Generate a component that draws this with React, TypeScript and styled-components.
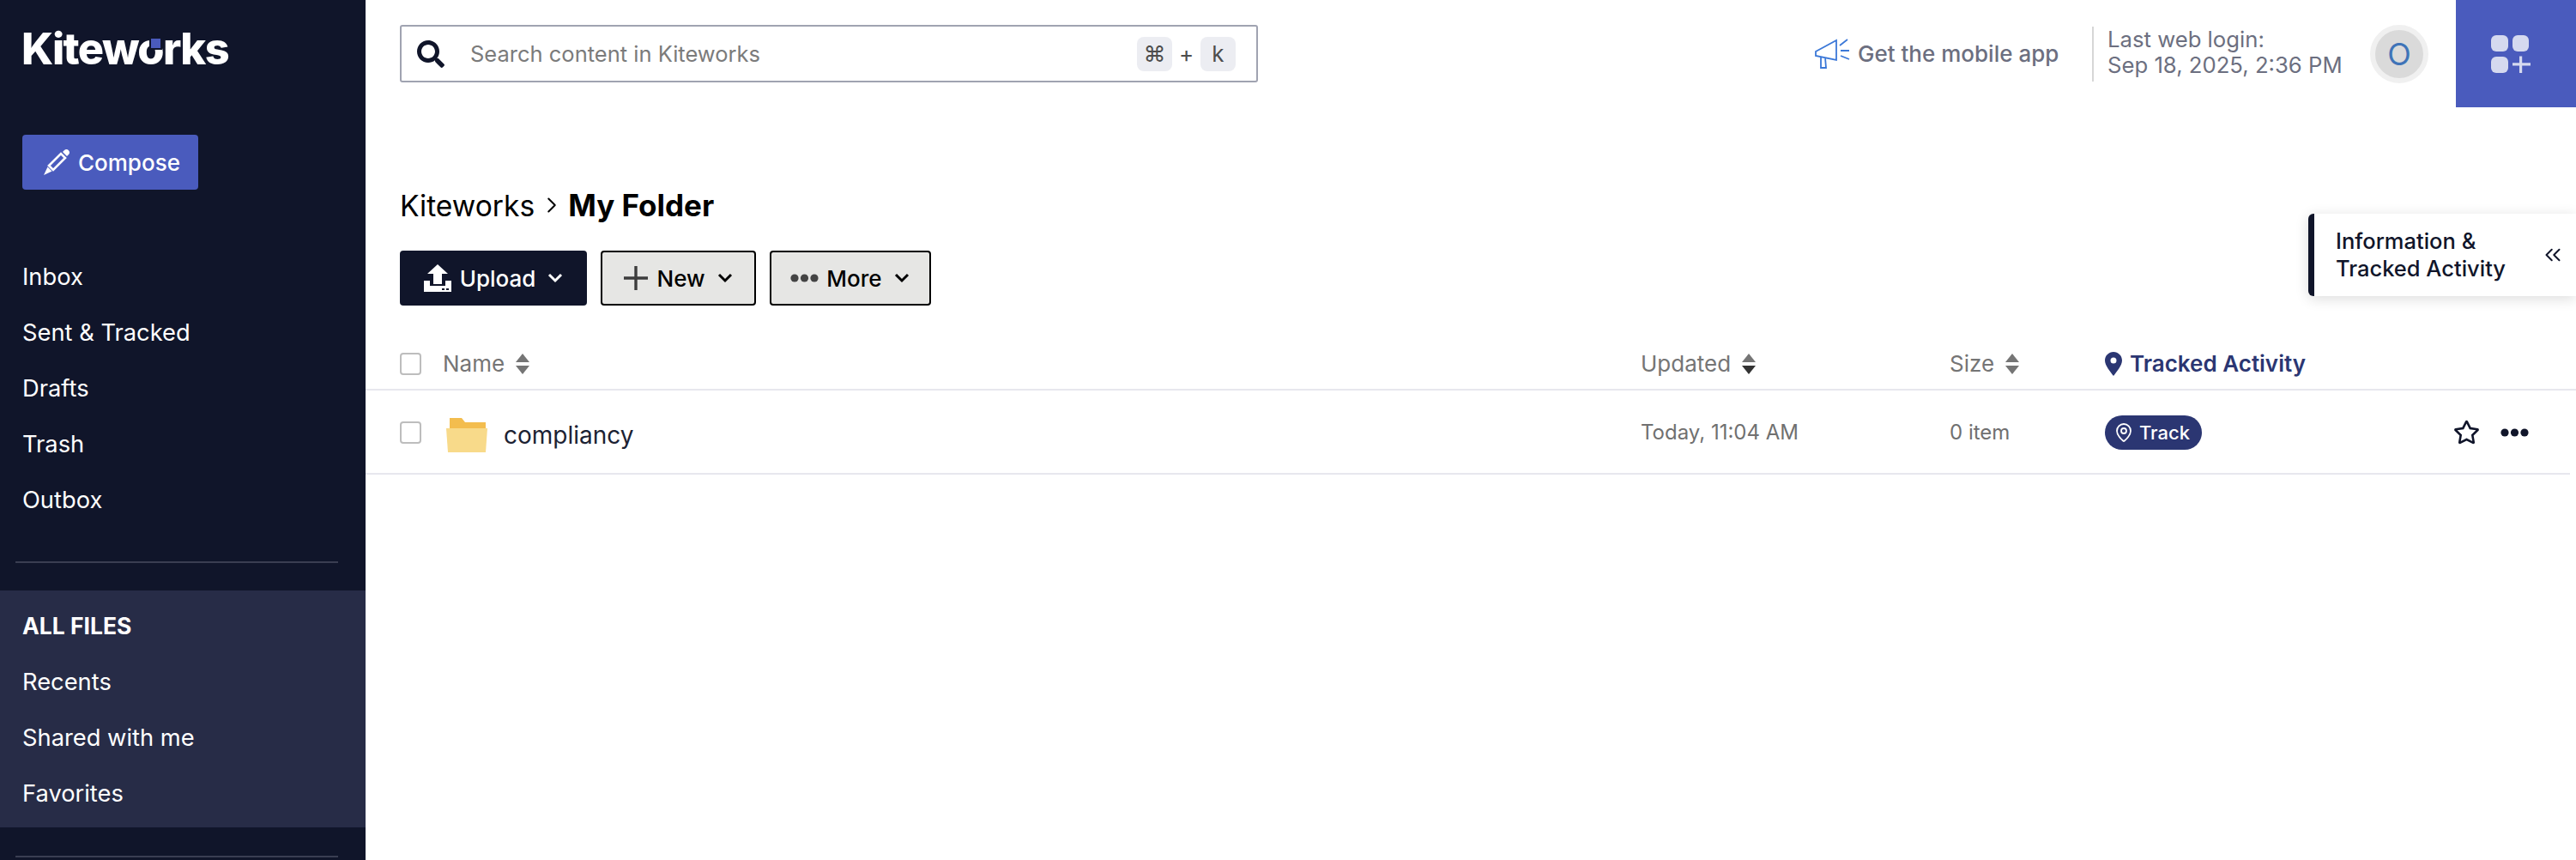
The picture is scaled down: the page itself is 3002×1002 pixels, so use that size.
import styled, { createGlobalStyle } from 'styled-components';
import { FaSearch, FaRegStar } from 'react-icons/fa';
import { ChevronRight, ChevronsLeft, MapPin } from 'lucide-react';

const GlobalStyle = createGlobalStyle`
  html, body { margin: 0; padding: 0; background: #fff; }
  body { font-family: Inter, "Noto Sans", sans-serif; overflow: hidden; }
  * { box-sizing: border-box; }
`;

const Page = styled.div`
  display: grid;
  grid-template-columns: 426px 1fr;
  width: 3002px;
  height: 1002px;
  overflow: hidden;
  position: relative;
`;

const Sidebar = styled.aside`
  background: #10152a;
  color: #fff;
  height: 1002px;
  overflow: hidden;
`;

const Logo = styled.div`
  padding: 24px 0 0 25px;
  height: 157px;
  font-size: 50.5px;
  line-height: 66px;
  font-weight: 800;
  letter-spacing: -1.6px;
`;

const LogoO = styled.span`
  position: relative;
  &::after {
    content: '';
    position: absolute;
    right: 3px;
    top: 19px;
    width: 11px;
    height: 11px;
    background: #4a5bbd;
    box-shadow: 0 0 0 2px #10152a;
  }
`;

const ComposeButton = styled.button`
  display: flex;
  align-items: center;
  gap: 9px;
  margin-left: 26px;
  width: 205px;
  height: 64px;
  padding: 0 0 0 24px;
  border: none;
  border-radius: 4px;
  background: #4a5bbd;
  color: #fff;
  font: 500 26px Inter, sans-serif;
`;

const NavList = styled.nav`
  margin-top: 69px;
  margin-bottom: 39px;
  display: flex;
  flex-direction: column;
`;

const NavItem = styled.div<{ $heading?: boolean }>`
  height: 65px;
  line-height: 65px;
  padding-left: 26px;
  font-size: ${p => (p.$heading ? 26.5 : 27.3)}px;
  font-weight: ${p => (p.$heading ? 700 : 400)};
`;

const SideDivider = styled.hr`
  margin: 0 32px 0 18px;
  border: none;
  height: 2px;
  background: #3a3e52;
`;

const FilesPanel = styled.div`
  margin: 32px 0 33px;
  padding: 9px 0 7px;
  height: 276px;
  background: #272c47;
`;

const Main = styled.main`
  display: flex;
  flex-direction: column;
  min-width: 0;
`;

const TopBar = styled.header`
  display: flex;
  align-items: center;
  height: 125px;
  padding-left: 40px;
`;

const SearchBox = styled.div`
  display: flex;
  align-items: center;
  flex: none;
  width: 1000px;
  height: 67px;
  padding: 0 24px 0 18px;
  border: 2px solid #a0a3b1;
  border-radius: 3px;
`;

const SearchPlaceholder = styled.span`
  margin-left: 30px;
  flex: 1;
  font-size: 25.5px;
  color: #7b7b7b;
`;

const KeyCap = styled.span`
  display: flex;
  align-items: center;
  justify-content: center;
  width: 41px;
  height: 40px;
  border-radius: 8px;
  background: #ecedf2;
  color: #4d4d4d;
  font-size: 26px;
`;

const KeyPlus = styled.span`
  width: 33px;
  text-align: center;
  font-size: 26px;
  color: #4d4d4d;
`;

const TopRight = styled.div`
  display: flex;
  align-items: center;
  flex: none;
  margin-left: 649px;
`;

const MobileLink = styled.div`
  display: flex;
  align-items: center;
  gap: 8px;
  width: 323px;
  font-size: 26px;
  font-weight: 500;
  color: #6c6f80;
`;

const LoginInfo = styled.div`
  width: 324px;
  height: 64px;
  padding-left: 16px;
  border-left: 2px solid #d6d6d6;
  font-size: 25.7px;
  line-height: 30px;
  color: #6c6f80;
`;

const AvatarRing = styled.div`
  display: flex;
  align-items: center;
  justify-content: center;
  width: 68px;
  height: 68px;
  border-radius: 50%;
  border: 6px solid #f0f0f0;
  background: #dadada;
  color: #3f74b8;
  font-size: 36px;
`;

const AppsTile = styled.div`
  display: flex;
  align-items: center;
  justify-content: center;
  margin-left: 32px;
  width: 140px;
  height: 125px;
  padding-right: 12px;
  background: #4a5bbd;
`;

const Breadcrumb = styled.div`
  display: flex;
  align-items: center;
  height: 48px;
  margin-top: 90px;
  padding-left: 40px;
  font-size: 33.6px;
  color: #000;
`;

const CurrentFolder = styled.span`
  font-size: 35px;
  font-weight: 700;
`;

const Toolbar = styled.div`
  display: flex;
  gap: 16px;
  margin-top: 29px;
  padding-left: 40px;
`;

const ToolButton = styled.button<{ $primary?: boolean; $width: number }>`
  display: flex;
  align-items: center;
  justify-content: center;
  gap: 9px;
  width: ${p => p.$width}px;
  height: 64px;
  padding: 0;
  border-radius: 4px;
  border: 2px solid ${p => (p.$primary ? '#10152a' : '#000')};
  background: ${p => (p.$primary ? '#10152a' : '#e6e6e4')};
  color: ${p => (p.$primary ? '#fff' : '#000')};
  font: 500 26px Inter, sans-serif;
`;

const Row = styled.div<{ $header?: boolean }>`
  display: grid;
  grid-template-columns: 1446px 360px 181px 1fr;
  align-items: center;
  height: ${p => (p.$header ? 62 : 98)}px;
  margin-top: ${p => (p.$header ? 37 : 0)}px;
  margin-right: ${p => (p.$header ? 0 : 7)}px;
  padding: ${p => (p.$header ? '1px 0 0 40px' : '1px 0 0 40px')};
  border-bottom: 2px solid #e7e7ee;
`;

const NameCell = styled.div`
  display: flex;
  align-items: center;
`;

const CheckBox = styled.span`
  display: block;
  width: 25px;
  height: 26px;
  border: 2px solid #bdbdbd;
  border-radius: 4px;
`;

const HeaderLabel = styled.div<{ $tracked?: boolean }>`
  display: flex;
  align-items: center;
  gap: ${p => (p.$tracked ? 9 : 13)}px;
  font-size: 26px;
  font-weight: ${p => (p.$tracked ? 600 : 400)};
  color: ${p => (p.$tracked ? '#2b3672' : '#757575')};
`;

const NameLabel = styled(HeaderLabel)`
  margin-left: 25px;
`;

const FolderName = styled.span`
  margin-left: 19px;
  font-size: 28px;
  color: #1c2233;
`;

const FolderIconWrap = styled.span`
  display: flex;
  margin-left: 29px;
  transform: translateY(3px);
`;

const FolderNameWrap = styled.span`
  display: flex;
  transform: translateY(3px);
`;

const CellText = styled.div`
  font-size: 24px;
  color: #707070;
`;

const TrackedCell = styled.div`
  display: flex;
  align-items: center;
  justify-content: space-between;
  padding-right: 48px;
`;

const TrackPill = styled.span`
  display: flex;
  align-items: center;
  gap: 6px;
  width: 113px;
  height: 40px;
  padding-left: 10px;
  border-radius: 20px;
  background: #2b3672;
  color: #fff;
  font-size: 22px;
  font-weight: 500;
`;

const RowActions = styled.div`
  display: flex;
  align-items: center;
  gap: 24px;
  color: #10152a;
`;

const InfoPanel = styled.div`
  position: absolute;
  top: 249px;
  right: 0;
  display: flex;
  align-items: center;
  width: 312px;
  height: 96px;
  padding-left: 25px;
  border-left: 7px solid #10152a;
  border-radius: 6px 0 0 6px;
  background: #fff;
  box-shadow: 0 3px 16px rgba(0, 0, 0, 0.14);
  font-size: 25.5px;
  font-weight: 500;
  line-height: 32px;
  color: #10152a;
`;

const InfoText = styled.div`
  flex: 1;
`;

const InfoChevron = styled.span`
  display: flex;
  margin-right: 12px;
  color: #10152a;
`;

const Sort = ({ dark }: { dark?: boolean }) => (
  <svg width="16" height="24" viewBox="0 0 16 24">
    <path d="M8 0 16 10H0Z" fill="#757575" />
    <path d="M0 14H16L8 24Z" fill={dark ? '#333' : '#757575'} />
  </svg>
);

const ChevronDown = ({ color = '#000' }: { color?: string }) => (
  <svg width="20" height="14" viewBox="0 0 20 14" style={{ marginLeft: 4 }}>
    <path d="M3 3 10 10 17 3" fill="none" stroke={color} strokeWidth="3" />
  </svg>
);

const ComposePencil = () => (
  <svg width="32" height="32" viewBox="0 0 32 32">
    <path d="M7 20 21 6 26 11 12 25Z" fill="none" stroke="#fff" strokeWidth="2.6" />
    <path d="M5.500 21.500 10.500 26.500 1 31Z" fill="#fff" />
    <path d="M23 4 25 2C26.500 .8 28.500 .8 30 2.200 31.400 3.600 31.400 5.600 30 7L28 9Z" fill="#fff" />
  </svg>
);

const Megaphone = () => (
  <svg width="42" height="36" viewBox="0 0 42 36" fill="none" stroke="#3b78d8" strokeWidth="1.8">
    <path d="M1 15 25 2V25L1 20ZM7 21V34H13L12 22" />
    <path d="M29 8 38 1M30 14H40M30 20 40 24" />
  </svg>
);

const UploadIcon = () => (
  <svg width="34" height="32" viewBox="0 0 34 32">
    <path d="M17 0 29 11H22V23H12V11H5Z" fill="#fff" />
    <path d="M1 19H8V25H26V19H33V32H1Z" fill="#fff" />
    <path d="M22 28H25V30H22ZM27 28H30V30H27Z" fill="#10152a" />
  </svg>
);

const PlusIcon = () => (
  <svg width="30" height="30" viewBox="0 0 30 30">
    <path d="M15 1V29M1 15H29" stroke="#3d3d3d" strokeWidth="3.4" />
  </svg>
);

const MoreDots = ({ color, width }: { color: string; width: number }) => (
  <svg width={width} height="10" viewBox="0 0 33 10">
    <circle cx="5" cy="5" r="4.6" fill={color} />
    <circle cx="16.5" cy="5" r="4.6" fill={color} />
    <circle cx="28" cy="5" r="4.6" fill={color} />
  </svg>
);

const FolderIcon = () => (
  <svg width="48" height="40" viewBox="0 0 48 40">
    <path d="M4 0H18L22 5H46V14H4Z" fill="#f3bd4e" />
    <path d="M0 12H48L46 40H2Z" fill="#f8da8a" />
  </svg>
);

const TrackedPin = () => (
  <svg width="20" height="28" viewBox="0 0 20 28">
    <path
      fillRule="evenodd"
      d="M10 0C4.5 0 0 4.4 0 9.9 0 16 6.5 23 10 28c3.5-5 10-12 10-18.100C20 4.400 15.500 0 10 0Zm0 6.500a3.500 3.500 0 1 1 0 7 3.500 3.500 0 0 1 0-7Z"
      fill="#2b3672"
    />
  </svg>
);

const AppsIcon = () => (
  <svg width="46" height="44" viewBox="0 0 46 44" fill="#d5d9ef">
    <rect x="0" y="0" width="20" height="19" rx="6" />
    <rect x="25" y="0" width="19" height="19" rx="6" />
    <rect x="0" y="25" width="20" height="19" rx="6" />
    <path d="M33 24.500h3.200v7.800H46v3.200h-9.800V44H33v-8.500h-8v-3.200h8Z" />
  </svg>
);

export default function App() {
  return (
    <Page>
      <GlobalStyle />
      <Sidebar>
        <Logo>
          Kitew<LogoO>o</LogoO>rks
        </Logo>
        <ComposeButton>
          <ComposePencil />
          Compose
        </ComposeButton>
        <NavList>
          <NavItem>Inbox</NavItem>
          <NavItem>Sent &amp; Tracked</NavItem>
          <NavItem>Drafts</NavItem>
          <NavItem>Trash</NavItem>
          <NavItem>Outbox</NavItem>
        </NavList>
        <SideDivider />
        <FilesPanel>
          <NavItem $heading>ALL FILES</NavItem>
          <NavItem>Recents</NavItem>
          <NavItem>Shared with me</NavItem>
          <NavItem>Favorites</NavItem>
        </FilesPanel>
        <SideDivider />
      </Sidebar>
      <Main>
        <TopBar>
          <SearchBox>
            <FaSearch size={32} color="#10152a" />
            <SearchPlaceholder>Search content in Kiteworks</SearchPlaceholder>
            <KeyCap>⌘</KeyCap>
            <KeyPlus>+</KeyPlus>
            <KeyCap>k</KeyCap>
          </SearchBox>
          <TopRight>
            <MobileLink>
              <Megaphone />
              Get the mobile app
            </MobileLink>
            <LoginInfo>
              Last web login:
              <br />
              Sep 18, 2025, 2:36 PM
            </LoginInfo>
            <AvatarRing>O</AvatarRing>
            <AppsTile>
              <AppsIcon />
            </AppsTile>
          </TopRight>
        </TopBar>
        <Breadcrumb>
          Kiteworks
          <ChevronRight size={30} strokeWidth={1.6} style={{ margin: '0 4px 0 5px' }} />
          <CurrentFolder>My Folder</CurrentFolder>
        </Breadcrumb>
        <Toolbar>
          <ToolButton $primary $width={218}>
            <UploadIcon />
            Upload
            <ChevronDown color="#fff" />
          </ToolButton>
          <ToolButton $width={181}>
            <PlusIcon />
            New
            <ChevronDown />
          </ToolButton>
          <ToolButton $width={188}>
            <MoreDots color="#444" width={33} />
            More
            <ChevronDown />
          </ToolButton>
        </Toolbar>
        <Row $header>
          <NameCell>
            <CheckBox />
            <NameLabel>
              Name <Sort />
            </NameLabel>
          </NameCell>
          <HeaderLabel>
            Updated <Sort dark />
          </HeaderLabel>
          <HeaderLabel>
            Size <Sort />
          </HeaderLabel>
          <HeaderLabel $tracked>
            <TrackedPin />
            Tracked Activity
          </HeaderLabel>
        </Row>
        <Row>
          <NameCell>
            <CheckBox />
            <FolderIconWrap>
              <FolderIcon />
            </FolderIconWrap>
            <FolderNameWrap>
              <FolderName>compliancy</FolderName>
            </FolderNameWrap>
          </NameCell>
          <CellText>Today, 11:04 AM</CellText>
          <CellText>0 item</CellText>
          <TrackedCell>
            <TrackPill>
              <MapPin size={24} strokeWidth={1.8} />
              Track
            </TrackPill>
            <RowActions>
              <FaRegStar size={31} />
              <MoreDots color="#10152a" width={33} />
            </RowActions>
          </TrackedCell>
        </Row>
      </Main>
      <InfoPanel>
        <InfoText>
          Information &amp;
          <br />
          Tracked Activity
        </InfoText>
        <InfoChevron>
          <ChevronsLeft size={30} strokeWidth={1.6} />
        </InfoChevron>
      </InfoPanel>
    </Page>
  );
}
